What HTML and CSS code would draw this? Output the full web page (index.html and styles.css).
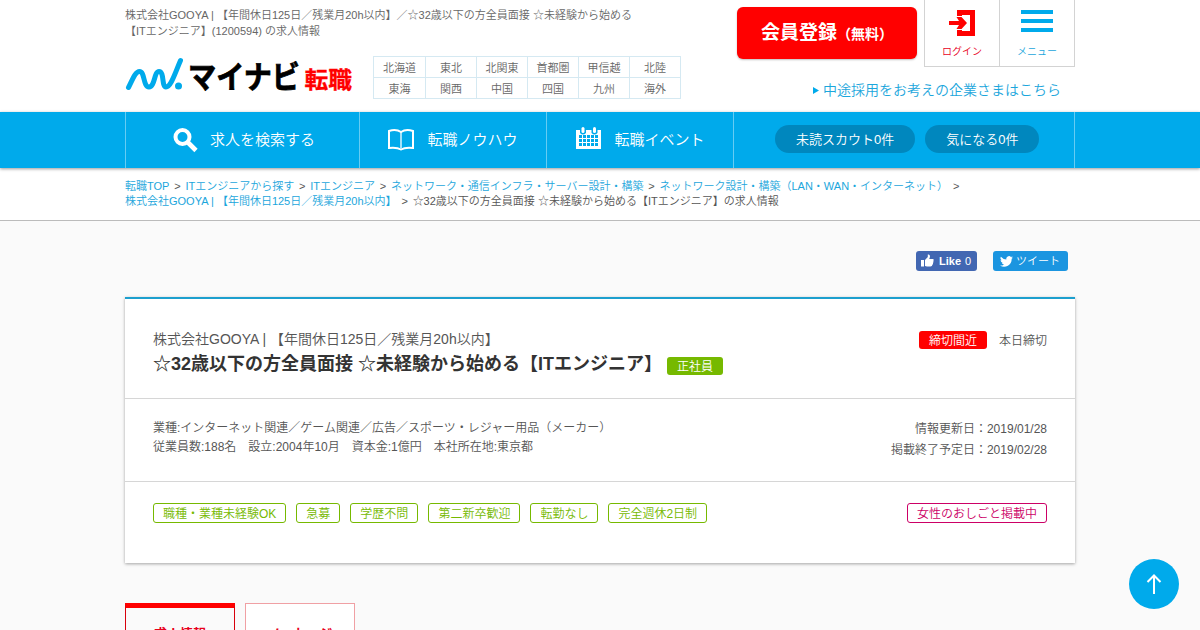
FILE: index.html
```html
<!DOCTYPE html>
<html lang="ja">
<head>
<meta charset="utf-8">
<title>ITエンジニアの求人情報</title>
<link rel="stylesheet" href="styles.css">
</head>
<body>
<header class="header">
  <div class="wrap header-inner">
    <div class="header-left">
      <h1 class="lead">株式会社GOOYA | 【年間休日125日／残業月20h以内】／☆32歳以下の方全員面接 ☆未経験から始める<br>【ITエンジニア】(1200594) の求人情報</h1>
      <div class="brand">
        <svg class="logo" width="230" height="40" viewBox="0 0 230 40">
          <path d="M3.500 32.500C7 26 10 16.500 14.500 16.500C20 16.500 18 32 24 32C30 32 29 16.500 34 16.500C39.500 16.500 36.500 32 41 32C46 32 50 18 55.500 5.500" fill="none" stroke="#00aaeb" stroke-width="5" stroke-linecap="round" stroke-linejoin="round"/>
          <circle cx="53.500" cy="31" r="3.500" fill="#00aaeb"/>
          <text class="logo-name" x="63" y="33" textLength="112" lengthAdjust="spacingAndGlyphs">マイナビ</text>
          <text class="logo-sub" x="179.500" y="33" textLength="47.500" lengthAdjust="spacingAndGlyphs">転職</text>
        </svg>
        <div class="areas">
          <a>北海道</a><a>東北</a><a>北関東</a><a>首都圏</a><a>甲信越</a><a>北陸</a>
          <a>東海</a><a>関西</a><a>中国</a><a>四国</a><a>九州</a><a>海外</a>
        </div>
      </div>
    </div>
    <div class="header-right">
      <div class="actions">
        <a class="join">会員登録<small>（無料）</small></a>
        <a class="tool login">
          <svg width="26" height="26" viewBox="0 0 26 26" fill="#f00"><path d="M8 0H26V26H8V20H13V21H21V5H13V6H8Z"/><path d="M0 11H10L7.500 7H12.500L18 13L12.500 19H7.500L10 15H0Z"/></svg>
          <span>ログイン</span>
        </a>
        <a class="tool menu">
          <svg width="32" height="26" viewBox="0 0 32 26" fill="#00aaeb"><path d="M0 0H32V4H0ZM0 9H32V13H0ZM0 18H32V22H0Z"/></svg>
          <span>メニュー</span>
        </a>
      </div>
      <a class="company"><svg width="6" height="7" viewBox="0 0 6 7"><path d="M0 0L6 3.500L0 7Z" fill="#00aaeb"/></svg>中途採用をお考えの企業さまはこちら</a>
    </div>
  </div>
</header>
<nav class="nav">
  <div class="wrap nav-inner">
    <a class="nav-item search"><svg width="25" height="25" viewBox="0 0 25 25" fill="none" stroke="#fff"><circle cx="9.500" cy="9" r="7" stroke-width="4"/><path d="M14 13.500L23 22.500" stroke-width="4.600"/></svg>求人を検索する</a>
    <a class="nav-item know"><svg width="26" height="22" viewBox="0 0 26 22"><path d="M1 2C5 .7 10 1 13 3C16 1 21 .7 25 2V19C20 18.500 16 18.700 13 20.500C10 18.700 6 18.500 1 19Z" fill="none" stroke="#fff" stroke-width="2"/><path d="M13 3V19" stroke="#fff" stroke-width="1.300"/></svg>転職ノウハウ</a>
    <a class="nav-item event"><svg width="25" height="23" viewBox="0 0 25 23"><path d="M0 3H25V22H0Z" fill="#fff"/><path d="M4 0H10V6Q7 9 4 6ZM15.500 0H21.500V6Q18.500 9 15.500 6Z" fill="#00aaeb"/><rect x="5.500" width="3" height="6" rx="1.500" fill="#fff"/><rect x="17" width="3" height="6" rx="1.500" fill="#fff"/><path d="M3 8H6V11H3ZM7 8H10V11H7ZM11 8H14V11H11ZM15 8H18V11H15ZM19 8H22V11H19ZM3 12H6V15H3ZM7 12H10V15H7ZM11 12H14V15H11ZM15 12H18V15H15ZM19 12H22V15H19ZM3 16H6V19H3ZM7 16H10V19H7ZM11 16H14V19H11ZM15 16H18V19H15ZM19 16H22V19H19Z" fill="#00aaeb"/></svg>転職イベント</a>
    <div class="nav-pills"><a class="pill">未読スカウト0件</a><a class="pill">気になる0件</a></div>
  </div>
</nav>
<div class="crumbs">
  <div class="wrap">
    <div class="crumb-line"><a>転職TOP</a><span>&gt;</span><a>ITエンジニアから探す</a><span>&gt;</span><a>ITエンジニア</a><span>&gt;</span><a>ネットワーク・通信インフラ・サーバー設計・構築</a><span>&gt;</span><a>ネットワーク設計・構築（LAN・WAN・インターネット）</a><span>&gt;</span></div>
    <div class="crumb-line"><a>株式会社GOOYA | 【年間休日125日／残業月20h以内】</a><span>&gt;</span><span>☆32歳以下の方全員面接 ☆未経験から始める【ITエンジニア】の求人情報</span></div>
  </div>
</div>
<main class="wrap">
  <div class="social">
    <a class="like"><svg width="13" height="13" viewBox="0 0 13 13" fill="#fff"><path d="M0 6H3V12.500H0ZM4 6L6.800 3V.6Q8.800 0 9 2.200Q9 3.500 8.200 5H12Q13.200 5.500 12.300 7Q12.800 8 12 9Q12.200 10 11.400 10.700Q11.300 12.500 9.500 12.500H6L4 12Z"/></svg><b>Like</b><span>0</span></a>
    <a class="tweet"><svg width="13" height="11" viewBox="0 0 24 20" fill="#fff"><path d="M24 2.400a10 10 0 0 1-2.800.8A5 5 0 0 0 23.300.5a10 10 0 0 1-3.100 1.200A4.900 4.900 0 0 0 11.800 6.200 14 14 0 0 1 1.700 1a4.900 4.900 0 0 0 1.500 6.600A5 5 0 0 1 1 7a4.900 4.900 0 0 0 3.900 4.900 5 5 0 0 1-2.200.1 4.900 4.900 0 0 0 4.600 3.400A10 10 0 0 1 0 17.500 14 14 0 0 0 21.500 5 10 10 0 0 0 24 2.400Z"/></svg>ツイート</a>
  </div>
  <section class="card">
    <div class="row title-row">
      <div>
        <p class="corp">株式会社GOOYA | 【年間休日125日／残業月20h以内】</p>
        <h2 class="job"><span>☆32歳以下の方全員面接 ☆未経験から始める【ITエンジニア】</span><em class="badge green">正社員</em></h2>
      </div>
      <div class="deadline"><em class="badge red">締切間近</em>本日締切</div>
    </div>
    <div class="row info-row">
      <p class="facts">業種:インターネット関連／ゲーム関連／広告／スポーツ・レジャー用品（メーカー）<br>従業員数:188名　設立:2004年10月　資本金:1億円　本社所在地:東京都</p>
      <p class="dates">情報更新日：2019/01/28<br>掲載終了予定日：2019/02/28</p>
    </div>
    <div class="row tag-row">
      <div class="tags"><span class="tag">職種・業種未経験OK</span><span class="tag">急募</span><span class="tag">学歴不問</span><span class="tag">第二新卒歓迎</span><span class="tag">転勤なし</span><span class="tag">完全週休2日制</span></div>
      <span class="tag pink">女性のおしごと掲載中</span>
    </div>
  </section>
  <div class="tabs"><a class="tab active">求人情報</a><a class="tab">メッセージ</a></div>
</main>
<a class="to-top"><svg width="16" height="20" viewBox="0 0 16 20" fill="none" stroke="#fff" stroke-width="2"><path d="M8 20V2M1.500 8L8 1.500L14.500 8"/></svg></a>
</body>
</html>
```
FILE: styles.css
```css
* { box-sizing: border-box; }
html { overflow: hidden; }
body {
  margin: 0;
  height: 630px;
  overflow: hidden;
  background: #fafafa;
  color: #555;
  font: 350 12px/16px "Liberation Sans", "Noto Sans CJK JP", sans-serif;
}
h1, h2, p { margin: 0; font-weight: 350; }
b { font-weight: 700; }
em { font-style: normal; }
svg { display: block; flex: none; }
a, span { white-space: nowrap; }
.wrap { width: 950px; margin: 0 auto; }

.header { height: 112px; background: #fff; }
.header-inner { display: flex; justify-content: space-between; }
.header-left { padding-top: 7px; }
.lead { font-size: 11px; line-height: 16px; color: #666; white-space: nowrap; }
.brand { display: flex; align-items: flex-start; padding-top: 17px; gap: 18px; }
.logo { margin-top: -1px; }
.logo-name { font: 700 31px "Noto Sans CJK JP", sans-serif; fill: #000; stroke: #000; stroke-width: .8px; }
.logo-sub { font: 700 23px "Noto Sans CJK JP", sans-serif; fill: #f00; stroke: #f00; stroke-width: .3px; }
.areas {
  display: grid;
  grid-template-columns: 52px repeat(5, 51px);
  grid-auto-rows: 21px;
  border-top: 1px solid #d5e9f2;
  border-left: 1px solid #d5e9f2;
  font-size: 11px;
  line-height: 22px;
  text-align: center;
  color: #666;
}
.areas a { border-right: 1px solid #d5e9f2; border-bottom: 1px solid #d5e9f2; }

.header-right { display: flex; flex-direction: column; align-items: flex-end; }
.actions { display: flex; }
.join {
  width: 180px;
  height: 52px;
  margin: 7px 7px 0 0;
  border-radius: 6px;
  background: #f00;
  box-shadow: 0 1px 2px rgba(0, 0, 0, .25);
  color: #fff;
  font-size: 19px;
  font-weight: bold;
  line-height: 52px;
  text-align: center;
}
.join small { font-size: 14px; }
.tool {
  display: flex;
  flex-direction: column;
  align-items: center;
  gap: 8px;
  width: 76px;
  height: 67px;
  padding-top: 10px;
  border: 1px solid #d3d3d3;
  border-top: 0;
  font-size: 10px;
}
.login { color: #e8001c; }
.menu { width: 75px; border-left: 0; color: #1ba6dc; }
.company {
  display: flex;
  align-items: center;
  gap: 4px;
  margin: 13px 14px 0 0;
  font-size: 14px;
  line-height: 20px;
  color: #1ba6dc;
}

.nav { position: relative; height: 56px; background: #00aaeb; box-shadow: 0 1px 3px rgba(0, 0, 0, .4); }
.nav-inner { display: flex; height: 56px; border-left: 1px solid #66ccf3; }
.nav-item {
  display: flex;
  align-items: center;
  justify-content: center;
  gap: 13px;
  width: 187px;
  border-right: 1px solid #66ccf3;
  color: #fff;
  font-size: 15px;
}
.nav-item.search { width: 234px; padding-left: 3px; gap: 12px; }
.nav-item.event { padding-left: 1px; }
.nav-item.event svg { margin-top: -4px; }
.nav-pills { flex: 1; display: flex; gap: 10px; padding: 13px 0 0 41px; border-right: 1px solid #66ccf3; }
.pill {
  height: 28px;
  padding: 0 21px;
  border-radius: 14px;
  background: #0087be;
  color: #fff;
  font-size: 13px;
  line-height: 29px;
}

.crumbs { height: 53px; padding-top: 11px; background: #fff; border-bottom: 1px solid #bbb; font-size: 11px; }
.crumb-line { display: flex; gap: 4.800px; line-height: 15px; }
.crumbs a { color: #1ba6dc; }

.social { display: flex; justify-content: flex-end; gap: 16px; padding: 30px 7px 0 0; }
.like, .tweet { display: flex; align-items: center; height: 20px; border-radius: 3px; color: #fff; font-size: 11px; }
.like { width: 61px; padding-left: 5px; background: #4267b2; }
.like svg { margin-top: -2px; }
.like b { margin: 0 4px 0 5px; }
.tweet { width: 75px; padding-left: 7px; gap: 3px; background: #1b95e0; }

.card {
  margin-top: 26px;
  height: 266px;
  background: #fff;
  border-top: 2px solid #1c9fce;
  box-shadow: 0 1px 3px rgba(0, 0, 0, .35);
}
.row { display: flex; justify-content: space-between; align-items: flex-start; padding: 0 28px; }
.title-row { height: 100px; padding-top: 30px; border-bottom: 1px solid #d6d6d6; }
.corp { font-size: 14px; line-height: 21px; }
.job { display: flex; align-items: flex-start; gap: 5px; font-size: 18px; font-weight: bold; line-height: 28px; color: #333; }
.badge { height: 18px; padding: 0 10px; border-radius: 3px; color: #fff; font-size: 12px; font-weight: 350; line-height: 20px; }
.green { margin-top: 7px; background: #76b900; }
.red { background: #f00; }
.deadline { display: flex; gap: 12px; margin-top: 2px; line-height: 20px; }
.info-row { height: 83px; border-bottom: 1px solid #d6d6d6; }
.facts { padding-top: 20px; line-height: 19px; }
.dates { padding-top: 20px; line-height: 21px; text-align: right; }
.tag-row { padding-top: 21px; }
.tags { display: flex; gap: 10px; }
.tag { height: 20px; padding: 0 9px; border: 1px solid #76b900; border-radius: 3px; color: #76b900; line-height: 20px; }
.pink { border-color: #cc0066; color: #cc0066; }

.tabs { display: flex; gap: 10px; margin-top: 40px; }
.tab {
  width: 110px;
  height: 60px;
  padding-top: 21px;
  border: 1px solid #f0a0a4;
  background: #fff;
  color: #e8001a;
  font-size: 13px;
  font-weight: bold;
  line-height: 18px;
  text-align: center;
}
.active { padding-top: 17px; border-color: #d8000c; border-top: 5px solid #f00; background: #fafafa; }

.to-top {
  position: fixed;
  right: 21px;
  bottom: 21px;
  display: flex;
  align-items: center;
  justify-content: center;
  width: 50px;
  height: 50px;
  border-radius: 50%;
  background: #00aaeb;
}
```
